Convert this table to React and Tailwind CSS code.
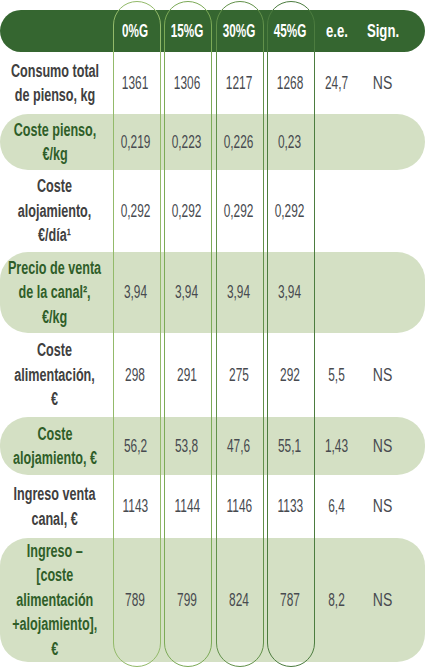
const font = { fontFamily: '"Liberation Sans", Arial, sans-serif' }

const cols = 'grid grid-cols-[110px_51px_52px_52px_50px_44px_48px] items-center'

const rows = [
  { label: ['Consumo total', 'de pienso, kg'], values: ['1361', '1306', '1217', '1268', '24,7', 'NS'], h: 'h-[62px]' },
  { label: ['Coste pienso,', '€/kg'], values: ['0,219', '0,223', '0,226', '0,23', '', ''], h: 'h-[56px]', shade: true },
  { label: ['Coste', 'alojamiento,', '€/día¹'], values: ['0,292', '0,292', '0,292', '0,292', '', ''], h: 'h-[82px]' },
  { label: ['Precio de venta', 'de la canal²,', '€/kg'], values: ['3,94', '3,94', '3,94', '3,94', '', ''], h: 'h-[81px]', shade: true },
  { label: ['Coste', 'alimentación,', '€'], values: ['298', '291', '275', '292', '5,5', 'NS'], h: 'h-[84px]' },
  { label: ['Coste', 'alojamiento, €'], values: ['56,2', '53,8', '47,6', '55,1', '1,43', 'NS'], h: 'h-[58px]', shade: true },
  { label: ['Ingreso venta', 'canal, €'], values: ['1143', '1144', '1146', '1133', '6,4', 'NS'], h: 'h-[63px]' },
  { label: ['Ingreso –', '[coste', 'alimentación', '+alojamiento],', '€'], values: ['789', '799', '824', '787', '8,2', 'NS'], h: 'h-[124px]', shade: true },
]

const headers = ['0%G', '15%G', '30%G', '45%G', 'e.e.', 'Sign.']

const capsules = [
  'left-[113px] border-[#93ba6a]',
  'left-[164px] border-[#7caa57]',
  'left-[216px] border-[#62914a]',
  'left-[267px] border-[#4c7c3f]',
]

function Row({ row }) {
  return (
    <div className={`${cols} ${row.h} ${row.shade ? 'bg-[#d4e0c4] rounded-[28px]' : ''}`}>
      <div className="flex justify-center">
        <div
          className={`flex flex-col items-center whitespace-nowrap scale-x-[0.7] font-bold leading-[24.5px] text-[18px] ${
            row.shade ? 'text-[#2f5e29]' : 'text-[#404040]'
          }`}
        >
          {row.label.map((line, i) => (
            <div key={i}>{line}</div>
          ))}
        </div>
      </div>
      {row.values.map((v, i) => (
        <div key={i} className="flex justify-center text-[18px] text-[#474a4f] whitespace-nowrap">
          <span className={`inline-block ${v === 'NS' ? 'scale-x-[0.78]' : 'scale-x-[0.66]'}`}>{v}</span>
        </div>
      ))}
    </div>
  )
}

export default function App() {
  return (
    <div className="relative w-[425px] h-[672px] bg-white pt-[10px] overflow-hidden" style={font}>
      {/* header */}
      <div className={`${cols} h-[42px] rounded-full bg-[#356630] text-white font-bold text-[18px]`}>
        <div />
        {headers.map((h, i) => (
          <div key={i} className="flex justify-center whitespace-nowrap">
            <span className={`inline-block ${i < 4 ? 'scale-x-[0.65]' : 'scale-x-[0.73]'}`}>{h}</span>
          </div>
        ))}
      </div>

      {rows.map((row, i) => (
        <Row key={i} row={row} />
      ))}

      {/* column capsules */}
      {capsules.map((c, i) => (
        <div
          key={i}
          className={`absolute top-[1px] w-[48px] h-[666px] rounded-full border-[1.5px] pointer-events-none ${c}`}
        />
      ))}
    </div>
  )
}
